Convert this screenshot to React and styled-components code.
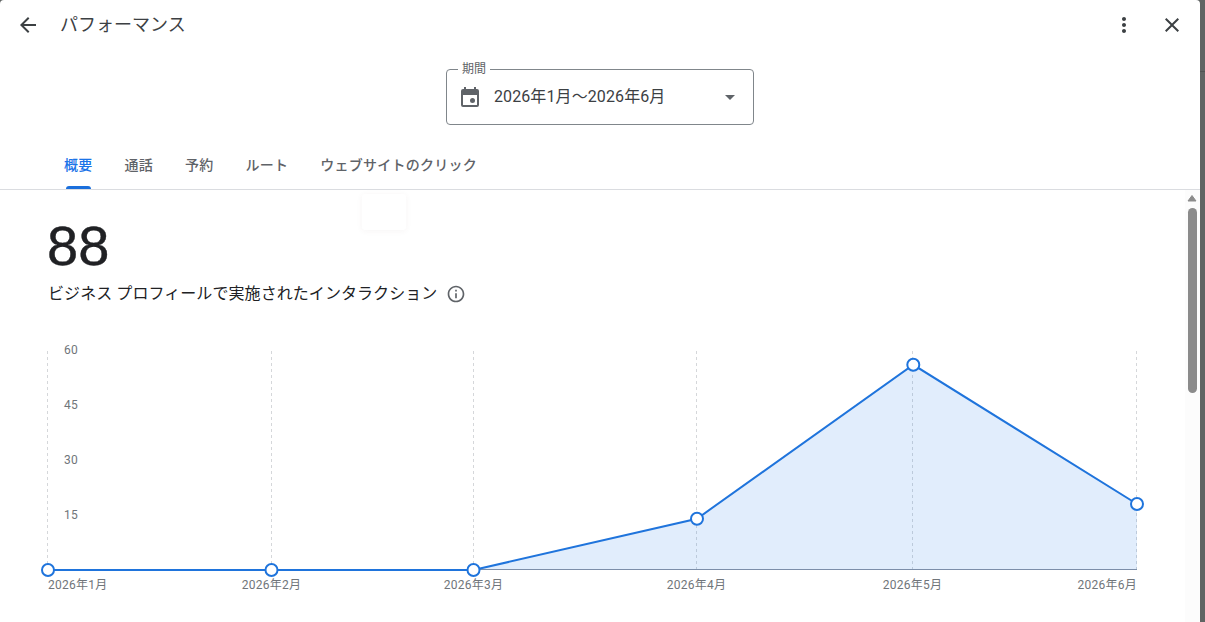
import React from "react";
import styled, { createGlobalStyle } from "styled-components";

const GlobalStyle = createGlobalStyle`
  * { box-sizing: border-box; }
  body {
    margin: 0;
    background: #606463;
    font-family: Roboto, "Noto Sans CJK JP", sans-serif;
    overflow: hidden;
  }
`;

const Screen = styled.div`
  width: 1205px;
  height: 622px;
  display: flex;
  background: linear-gradient(#606463 0 71px, #505353 71px 72px, #606463 72px);
`;

const Dialog = styled.main`
  position: relative;
  width: 1200px;
  height: 622px;
  display: flex;
  flex-direction: column;
  background: #fff;
  border-radius: 4px 4px 0 0;
`;

const Header = styled.header`
  height: 49px;
  display: flex;
  align-items: center;
  padding: 0 16px;
`;

const IconButton = styled.button`
  width: 24px;
  height: 24px;
  margin-left: ${(p) => p.$gap || 0}px;
  padding: 0;
  border: 0;
  background: none;
  color: #3c4043;
  display: flex;
  svg { display: block; fill: currentColor; }
`;

const Title = styled.h1`
  flex: 1;
  margin: 0 0 0 20px;
  font-size: 18px;
  line-height: 24px;
  font-weight: 400;
  color: #3c4043;
`;

const PeriodRow = styled.div`
  display: flex;
  justify-content: center;
  padding-top: 20px;
`;

const PeriodField = styled.div`
  position: relative;
  width: 308px;
  height: 56px;
  border: 1px solid #80868b;
  border-radius: 4px;
  display: flex;
  align-items: center;
  padding: 0 11px;
  color: #5f6368;
  svg { display: block; fill: currentColor; }
`;

const PeriodLabel = styled.span`
  position: absolute;
  left: 11px;
  top: -9px;
  padding: 0 4px;
  background: #fff;
  font-size: 12px;
  line-height: 16px;
`;

const PeriodValue = styled.span`
  flex: 1;
  margin-left: 12px;
  font-size: 16px;
  line-height: 24px;
  letter-spacing: 0.1px;
  color: #3c4043;
`;

const Tabs = styled.nav`
  height: 65px;
  flex: none;
  display: flex;
  align-items: stretch;
  gap: 32px;
  padding: 16px 64px 0;
  border-bottom: 1px solid #dadce0;
`;

const Tab = styled.div`
  display: flex;
  flex-direction: column;
  justify-content: space-between;
  align-items: center;
  padding-top: 14px;
  font-size: 14px;
  line-height: 20px;
  font-weight: 500;
  letter-spacing: 0.25px;
  white-space: nowrap;
  color: ${(p) => (p.$active ? "#1a73e8" : "#5f6368")};
`;

const Indicator = styled.span`
  width: 25px;
  height: 3px;
  border-radius: 3px 3px 0 0;
  background: #1a6fdc;
`;

const FadedCard = styled.div`
  position: absolute;
  left: 362px;
  top: 194px;
  width: 44px;
  height: 36px;
  border-radius: 3px;
  box-shadow: 0 1px 6px rgba(90, 50, 50, 0.05);
`;

const Body = styled.div`
  flex: 1;
  min-height: 0;
  display: flex;
`;

const Content = styled.section`
  width: 1185px;
  display: flex;
  flex-direction: column;
`;

const Total = styled.div`
  margin: 24px 0 0 47px;
  font-family: "Liberation Sans", sans-serif;
  font-size: 56px;
  line-height: 64px;
  -webkit-text-stroke: 0.4px #202124;
  color: #202124;
`;

const Summary = styled.div`
  display: flex;
  align-items: center;
  gap: 9px;
  margin: 4px 0 0 48px;
  height: 24px;
  font-size: 16px;
  line-height: 24px;
  letter-spacing: 0.07px;
  color: #202124;
  svg { display: block; fill: #5f6368; }
`;

const Chart = styled.svg`
  display: block;
  margin-top: 34px;
  flex: none;
  text { font-size: 12px; fill: #70757a; letter-spacing: 0.25px; }
`;

const ScrollTrack = styled.div`
  width: 15px;
  display: flex;
  flex-direction: column;
  align-items: center;
  padding: 4px 1px 0 0;
  background: #fcfcfc;
`;

const ScrollThumb = styled.div`
  width: 9px;
  height: 185px;
  margin-top: 6px;
  border-radius: 5px;
  background: #8b8b8b;
`;

const tabs = ["概要", "通話", "予約", "ルート", "ウェブサイトのクリック"];

const points = [
  { label: "2026年1月", x: 48, grid: 47.5, y: 230, anchor: "start" },
  { label: "2026年2月", x: 271.5, grid: 271.5, y: 230, anchor: "middle" },
  { label: "2026年3月", x: 473.5, grid: 473.5, y: 230, anchor: "middle" },
  { label: "2026年4月", x: 697, grid: 696.5, y: 178.7, anchor: "middle" },
  { label: "2026年5月", x: 913.3, grid: 912.5, y: 24.8, anchor: "middle" },
  { label: "2026年6月", x: 1137, grid: 1136.5, y: 164, anchor: "end" },
];

const ticks = [60, 45, 30, 15];
const line = points.map((p) => `${p.x},${p.y}`).join(" ");

const Icon = ({ d, size = 24 }) => (
  <svg width={size} height={size} viewBox="0 0 24 24">
    <path d={d} />
  </svg>
);

function InteractionChart() {
  return (
    <Chart width="1185" height="270" viewBox="0 0 1185 270">
      {points.map((p) => (
        <line key={p.label} x1={p.grid} x2={p.grid} y1="11" y2="230" stroke="#d5d7da" strokeDasharray="3 3" />
      ))}
      <line x1="48" x2="1137" y1="229.5" y2="229.5" stroke="#8c92a0" />
      <polygon points={`48,230 ${line} 1137,230`} fill="#1a73e8" fillOpacity="0.13" />
      <polyline points={line} fill="none" stroke="#1f74dc" strokeWidth="2" />
      {points.map((p) => (
        <circle key={p.label} cx={p.x} cy={p.y} r="6" fill="#fff" stroke="#1f74dc" strokeWidth="2" />
      ))}
      {ticks.map((t, i) => (
        <text key={t} x="64" y={14 + i * 55}>{t}</text>
      ))}
      {points.map((p) => (
        <text key={p.label} x={p.anchor === "middle" ? p.grid : p.x} y="249" textAnchor={p.anchor}>{p.label}</text>
      ))}
    </Chart>
  );
}

export default function App() {
  return (
    <>
      <GlobalStyle />
      <Screen>
        <Dialog>
          <Header>
            <IconButton aria-label="戻る">
              <Icon d="M20 11H7.83l5.59-5.59L12 4l-8 8 8 8 1.41-1.41L7.83 13H20v-2z" />
            </IconButton>
            <Title>パフォーマンス</Title>
            <IconButton aria-label="その他">
              <Icon d="M12 8c1.1 0 2-.9 2-2s-.9-2-2-2-2 .9-2 2 .9 2 2 2zm0 2c-1.1 0-2 .9-2 2s.9 2 2 2 2-.9 2-2-.9-2-2-2zm0 6c-1.1 0-2 .9-2 2s.9 2 2 2 2-.9 2-2-.9-2-2-2z" />
            </IconButton>
            <IconButton aria-label="閉じる" $gap={24}>
              <Icon d="M19 6.41 17.59 5 12 10.59 6.41 5 5 6.41 10.59 12 5 17.59 6.41 19 12 13.41 17.59 19 19 17.59 13.41 12z" />
            </IconButton>
          </Header>
          <PeriodRow>
            <PeriodField>
              <PeriodLabel>期間</PeriodLabel>
              <svg width="24" height="24" viewBox="0 0 24 24">
                <path fillRule="evenodd" d="M5 4h1V2h2v2h8V2h2v2h1a2 2 0 0 1 2 2v14a2 2 0 0 1-2 2H5a2 2 0 0 1-2-2V6a2 2 0 0 1 2-2zm0 6v10h14V10z" />
                <circle cx="14.5" cy="15.5" r="2.5" />
              </svg>
              <PeriodValue>2026年1月～2026年6月</PeriodValue>
              <Icon d="M7 10l5 5 5-5z" />
            </PeriodField>
          </PeriodRow>
          <Tabs>
            {tabs.map((name, i) => (
              <Tab key={name} $active={i === 0}>
                {name}
                {i === 0 && <Indicator />}
              </Tab>
            ))}
          </Tabs>
          <FadedCard />
          <Body>
            <Content>
              <Total>88</Total>
              <Summary>
                ビジネス プロフィールで実施されたインタラクション
                <Icon size={20} d="M11 7h2v2h-2zm0 4h2v6h-2zm1-9C6.48 2 2 6.48 2 12s4.48 10 10 10 10-4.48 10-10S17.52 2 12 2zm0 18c-4.41 0-8-3.59-8-8s3.59-8 8-8 8 3.59 8 8-3.59 8-8 8z" />
              </Summary>
              <InteractionChart />
            </Content>
            <ScrollTrack>
              <svg width="10" height="8" viewBox="0 0 10 8">
                <path d="M5 1.5 9 7H1z" fill="#8b8b8b" stroke="#8b8b8b" strokeLinejoin="round" />
              </svg>
              <ScrollThumb />
            </ScrollTrack>
          </Body>
        </Dialog>
      </Screen>
    </>
  );
}
